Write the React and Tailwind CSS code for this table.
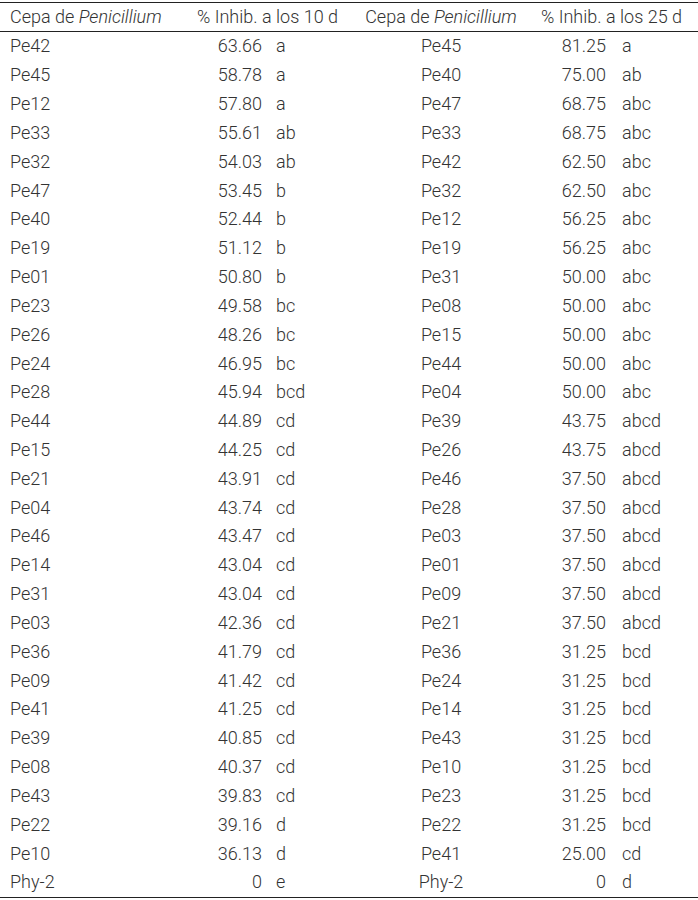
import React from "react";

const left = [
  ["Pe42", "63.66", "a"],
  ["Pe45", "58.78", "a"],
  ["Pe12", "57.80", "a"],
  ["Pe33", "55.61", "ab"],
  ["Pe32", "54.03", "ab"],
  ["Pe47", "53.45", "b"],
  ["Pe40", "52.44", "b"],
  ["Pe19", "51.12", "b"],
  ["Pe01", "50.80", "b"],
  ["Pe23", "49.58", "bc"],
  ["Pe26", "48.26", "bc"],
  ["Pe24", "46.95", "bc"],
  ["Pe28", "45.94", "bcd"],
  ["Pe44", "44.89", "cd"],
  ["Pe15", "44.25", "cd"],
  ["Pe21", "43.91", "cd"],
  ["Pe04", "43.74", "cd"],
  ["Pe46", "43.47", "cd"],
  ["Pe14", "43.04", "cd"],
  ["Pe31", "43.04", "cd"],
  ["Pe03", "42.36", "cd"],
  ["Pe36", "41.79", "cd"],
  ["Pe09", "41.42", "cd"],
  ["Pe41", "41.25", "cd"],
  ["Pe39", "40.85", "cd"],
  ["Pe08", "40.37", "cd"],
  ["Pe43", "39.83", "cd"],
  ["Pe22", "39.16", "d"],
  ["Pe10", "36.13", "d"],
  ["Phy-2", "0", "e"],
];

const right = [
  ["Pe45", "81.25", "a"],
  ["Pe40", "75.00", "ab"],
  ["Pe47", "68.75", "abc"],
  ["Pe33", "68.75", "abc"],
  ["Pe42", "62.50", "abc"],
  ["Pe32", "62.50", "abc"],
  ["Pe12", "56.25", "abc"],
  ["Pe19", "56.25", "abc"],
  ["Pe31", "50.00", "abc"],
  ["Pe08", "50.00", "abc"],
  ["Pe15", "50.00", "abc"],
  ["Pe44", "50.00", "abc"],
  ["Pe04", "50.00", "abc"],
  ["Pe39", "43.75", "abcd"],
  ["Pe26", "43.75", "abcd"],
  ["Pe46", "37.50", "abcd"],
  ["Pe28", "37.50", "abcd"],
  ["Pe03", "37.50", "abcd"],
  ["Pe01", "37.50", "abcd"],
  ["Pe09", "37.50", "abcd"],
  ["Pe21", "37.50", "abcd"],
  ["Pe36", "31.25", "bcd"],
  ["Pe24", "31.25", "bcd"],
  ["Pe14", "31.25", "bcd"],
  ["Pe43", "31.25", "bcd"],
  ["Pe10", "31.25", "bcd"],
  ["Pe23", "31.25", "bcd"],
  ["Pe22", "31.25", "bcd"],
  ["Pe41", "25.00", "cd"],
  ["Phy-2", "0", "d"],
];

export default function App() {
  return (
    <div
      className="w-[698px] h-[900px] bg-white text-[#333333] font-light text-[18px] leading-none pt-[2px]"
      style={{ fontFamily: "Roboto, 'Liberation Sans', sans-serif" }}
    >
      <div className="border-t border-b border-[#222222] flex items-center h-[30px]">
        <div className="w-[180px] pl-[10px] whitespace-nowrap">
          Cepa de <i>Penicillium</i>
        </div>
        <div className="w-[170px] pl-[5px] text-center whitespace-nowrap">% Inhib. a los 10 d</div>
        <div className="w-[184px] pr-[2px] text-center whitespace-nowrap">
          Cepa de <i>Penicillium</i>
        </div>
        <div className="w-[164px] pr-[9px] text-center whitespace-nowrap">% Inhib. a los 25 d</div>
      </div>
      <div className="border-b border-[#222222]">
        {left.map((l, i) => {
          const r = right[i];
          return (
            <div key={i} className="flex items-center h-[28.83px]">
              <div className="w-[180px] pl-[10px]">{l[0]}</div>
              <div className="w-[82px] text-right">{l[1]}</div>
              <div className="w-[88px] pl-[14px]">{l[2]}</div>
              <div className="w-[184px] pr-[2px] text-center">{r[0]}</div>
              <div className="w-[72px] text-right">{r[1]}</div>
              <div className="w-[92px] pl-[16px]">{r[2]}</div>
            </div>
          );
        })}
      </div>
    </div>
  );
}
